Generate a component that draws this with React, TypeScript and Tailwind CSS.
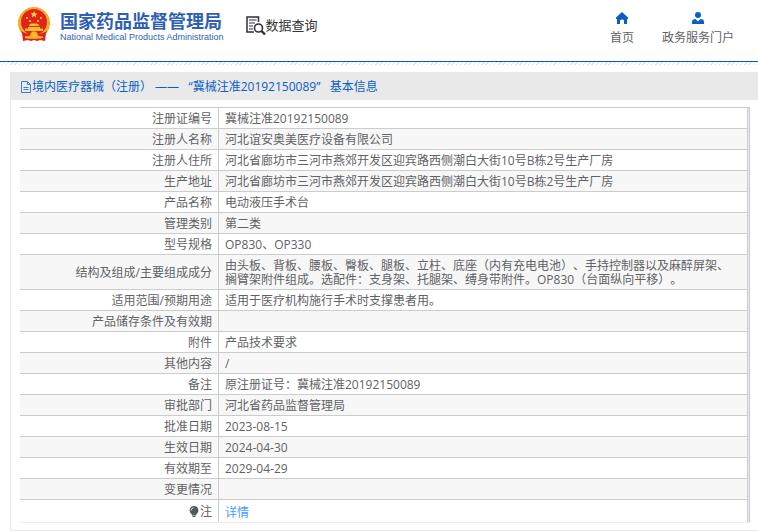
interface Field {
  label: string
  value: string
}

const fields: Field[] = [
  { label: "注册证编号", value: "冀械注准20192150089" },
  { label: "注册人名称", value: "河北谊安奥美医疗设备有限公司" },
  { label: "注册人住所", value: "河北省廊坊市三河市燕郊开发区迎宾路西侧潮白大街10号B栋2号生产厂房" },
  { label: "生产地址", value: "河北省廊坊市三河市燕郊开发区迎宾路西侧潮白大街10号B栋2号生产厂房" },
  { label: "产品名称", value: "电动液压手术台" },
  { label: "管理类别", value: "第二类" },
  { label: "型号规格", value: "OP830、OP330" },
  {
    label: "结构及组成/主要组成成分",
    value: "由头板、背板、腰板、臀板、腿板、立柱、底座（内有充电电池）、手持控制器以及麻醉屏架、搁臂架附件组成。选配件：支身架、托腿架、缚身带附件。OP830（台面纵向平移）。",
  },
  { label: "适用范围/预期用途", value: "适用于医疗机构施行手术时支撑患者用。" },
  { label: "产品储存条件及有效期", value: "" },
  { label: "附件", value: "产品技术要求" },
  { label: "其他内容", value: "/" },
  { label: "备注", value: "原注册证号：冀械注准20192150089" },
  { label: "审批部门", value: "河北省药品监督管理局" },
  { label: "批准日期", value: "2023-08-15" },
  { label: "生效日期", value: "2024-04-30" },
  { label: "有效期至", value: "2029-04-29" },
  { label: "变更情况", value: "" },
]

function Emblem() {
  return (
    <svg width="34" height="36" viewBox="0 0 34 36" aria-hidden="true">
      <path d="M5 25 L6 34 L11 33 L14 34 L17 33 L20 34 L23 33 L28 34 L29 25Z" fill="#d9251d" />
      <circle cx="17" cy="16" r="16" fill="#f0b429" />
      <circle cx="17" cy="16" r="15" fill="none" stroke="#e09c22" strokeWidth="1" strokeDasharray="2 2" />
      <circle cx="17" cy="15" r="13" fill="#e3231b" />
      <path d="M17 4 l1 2.2 2.4.2 -1.8 1.6 .6 2.4 -2.2-1.3 -2.2 1.3 .6-2.4 -1.8-1.6 2.4-.2z" fill="#ffd83a" />
      <g fill="#ffd83a">
        <circle cx="10" cy="11" r="1.1" />
        <circle cx="24" cy="11" r="1.1" />
        <circle cx="13" cy="14" r="1.1" />
        <circle cx="21" cy="14" r="1.1" />
      </g>
      <path d="M12 18 L14 16.5 H20 L22 18 V19 H12Z M11 20 H23 V21.5 H26 V24 H8 V21.5 H11Z" fill="#f6bd2b" />
      <path d="M4 24 Q10 28 17 26 Q24 28 30 24 L28 29 Q23 30 20 28 H14 Q11 30 6 29Z" fill="#e3231b" />
      <circle cx="17" cy="28" r="3.5" fill="#f6bd2b" stroke="#e09c22" strokeWidth=".8" />
      <path d="M8 30 Q12 32 14 30 M20 30 Q23 32 26 30" fill="none" stroke="#f6bd2b" strokeWidth="1.4" />
    </svg>
  )
}

function SearchDocIcon() {
  return (
    <svg width="20" height="20" viewBox="0 0 20 20" fill="none" stroke="#2f2f3f" aria-hidden="true">
      <path d="M12.5 6 V1 H1 V16 H8" strokeWidth="1.5" />
      <path d="M3 4 H10.5 M3 7 H9 M3 10 H7 M3 13 H7" strokeWidth="1" />
      <circle cx="12.5" cy="12" r="4" strokeWidth="1.6" />
      <path d="M15.5 15 L19 18.5" strokeWidth="2.4" />
    </svg>
  )
}

function HomeIcon() {
  return (
    <svg width="12" height="12" viewBox="0 0 12 12" fill="#0a5fc4" aria-hidden="true">
      <path d="M6 0 L12 5.5 V7 H11 V12 H8 V8.5 Q8 7.5 6 7.5 Q4 7.5 4 8.5 V12 H1 V7 H0 V5.5Z" />
    </svg>
  )
}

function UserIcon() {
  return (
    <svg width="12" height="12" viewBox="0 0 12 12" fill="#0a5fc4" aria-hidden="true">
      <circle cx="6" cy="3" r="3" />
      <path d="M0 12 V10 Q0 7 3.5 7 L6 9.5 L8.5 7 Q12 7 12 10 V12Z" />
    </svg>
  )
}

function DocIcon() {
  return (
    <svg width="11" height="12" viewBox="0 0 11 12" fill="none" stroke="#3f7fd0" aria-hidden="true">
      <path d="M.5 .5 H6.5 L9.5 3.5 V11.5 H.5Z M6.5 .5 V3.5 H9.5 M2.5 6.5 H7.5 M2.5 8.5 H7.5" />
    </svg>
  )
}

function BulbIcon() {
  return (
    <svg width="10" height="12" viewBox="0 0 10 12" aria-hidden="true">
      <path d="M5 0 A4.4 4.4 0 0 1 7.5 8 L7 9.5 H3 L2.5 8 A4.4 4.4 0 0 1 5 0Z M3.5 10 H6.5 V11 H3.5Z" fill="#55585c" />
      <path d="M2 4.5 Q2.2 2.2 4.5 1.8" fill="none" stroke="#fff" strokeWidth=".8" />
    </svg>
  )
}

export default function App() {
  return (
    <div className="bg-white font-['Open_Sans','Noto_Sans_CJK_SC',sans-serif] text-[12px] leading-[14px] text-[#606266] [text-spacing-trim:space-all]">
      <header className="flex h-[62px] items-start justify-between border-b border-[#0a5cb0] pr-6 pl-[17px]">
        <div className="flex gap-[22px]">
          <a href="#" className="flex gap-[9px] pt-[7px]">
            <Emblem />
            <span className="flex flex-col pt-1 text-[#2f5fb3]">
              <span className="text-[18px] leading-5 font-bold">国家药品监督管理局</span>
              <span className="font-['Liberation_Sans',sans-serif] text-[9px] leading-3">National Medical Products Administration</span>
            </span>
          </a>
          <a href="#" className="flex pt-4 text-[13px] leading-[18px] text-[#333]">
            <SearchDocIcon />
            <span>数据查询</span>
          </a>
        </div>
        <nav className="flex gap-7 pt-3">
          <a href="#" className="flex flex-col items-center gap-[7px]">
            <HomeIcon />
            首页
          </a>
          <a href="#" className="flex flex-col items-center gap-[7px]">
            <UserIcon />
            政务服务门户
          </a>
        </nav>
      </header>
      <div className="h-[3px] bg-[repeating-linear-gradient(135deg,#e4e4e4_0_1px,#fff_1px_3px)]" />

      <main className="mt-[7px] ml-[10px] border-b border-l border-[#e8e8e8] pb-[7px]">
        <h1 className="flex h-7 items-center bg-[#e9e9e9] pt-px pl-[10px] text-[#0a5fc4]">
          <DocIcon />
          <span className="whitespace-pre">境内医疗器械（注册） ——   “冀械注准20192150089”   基本信息</span>
        </h1>
        <div className="mt-[7px] mr-2 ml-[9px] border-t border-r border-b border-t-[#ccc] border-r-[#c8c8d0] border-b-[#ebebf5] bg-[#ebebf5] pr-px">
          <table className="w-full table-fixed border-separate border-spacing-0 border-r border-[#ccc] bg-white">
            <colgroup>
              <col className="w-[199px]" />
              <col />
            </colgroup>
            <tbody>
              {fields.map((field) => (
                <tr key={field.label} className="h-[21px] even:bg-[#f7f7f7]">
                  <th scope="row" className="border-r border-b border-[#ccc] px-[6px] pt-1 pb-[2px] text-right font-normal">
                    {field.label}
                  </th>
                  <td className="border-b border-[#ccc] pt-1 pr-3 pb-[2px] pl-[6px]">{field.value}</td>
                </tr>
              ))}
              <tr className="h-[22px]">
                <th scope="row" className="border-r border-[#ccc] px-[6px] pt-px font-normal">
                  <span className="flex items-center justify-end gap-px">
                    <BulbIcon />
                    注
                  </span>
                </th>
                <td className="pt-1 pl-[6px]">
                  <a href="#" className="text-[#409eff]">详情</a>
                </td>
              </tr>
            </tbody>
          </table>
        </div>
      </main>
    </div>
  )
}
